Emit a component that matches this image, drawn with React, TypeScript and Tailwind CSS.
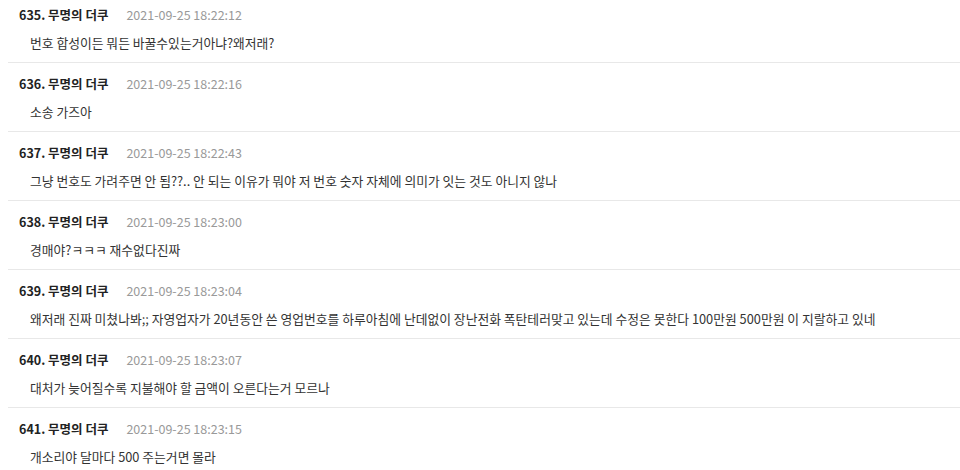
const COMMENTS = [
  { no: 635, time: "2021-09-25 18:22:12", text: "번호 합성이든 뭐든 바꿀수있는거아냐?왜저래?" },
  { no: 636, time: "2021-09-25 18:22:16", text: "소송 가즈아" },
  {
    no: 637,
    time: "2021-09-25 18:22:43",
    text: "그냥 번호도 가려주면 안 됨??.. 안 되는 이유가 뭐야 저 번호 숫자 자체에 의미가 잇는 것도 아니지 않나",
  },
  { no: 638, time: "2021-09-25 18:23:00", text: "경매야?ㅋㅋㅋ 재수없다진짜" },
  {
    no: 639,
    time: "2021-09-25 18:23:04",
    text: "왜저래 진짜 미쳤나봐;; 자영업자가 20년동안 쓴 영업번호를 하루아침에 난데없이 장난전화 폭탄테러맞고 있는데 수정은 못한다 100만원 500만원 이 지랄하고 있네",
  },
  { no: 640, time: "2021-09-25 18:23:07", text: "대처가 늦어질수록 지불해야 할 금액이 오른다는거 모르나" },
  { no: 641, time: "2021-09-25 18:23:15", text: "개소리야 달마다 500 주는거면 몰라" },
];

export default function App() {
  return (
    <div
      className="h-[470px] w-[960px] overflow-hidden bg-white"
      style={{ fontFamily: '"Noto Sans CJK KR", sans-serif' }}
    >
      <ul className="-mt-[7px] ml-2">
        {COMMENTS.map((c) => (
          <li key={c.no} className="border-t border-[#e8e8e8] pt-3 pb-[10px]">
            <div className="flex items-center pl-[11px] text-[12.5px] leading-[18px]">
              <span className="font-bold text-[#222]">
                {c.no}. 무명의 더쿠
              </span>
              <span className="ml-[18px] text-[#999]">{c.time}</span>
            </div>
            <p className="mt-[10px] pl-[22px] text-[12.8px] leading-[18px] text-[#333]">
              {c.text}
            </p>
          </li>
        ))}
      </ul>
    </div>
  );
}
